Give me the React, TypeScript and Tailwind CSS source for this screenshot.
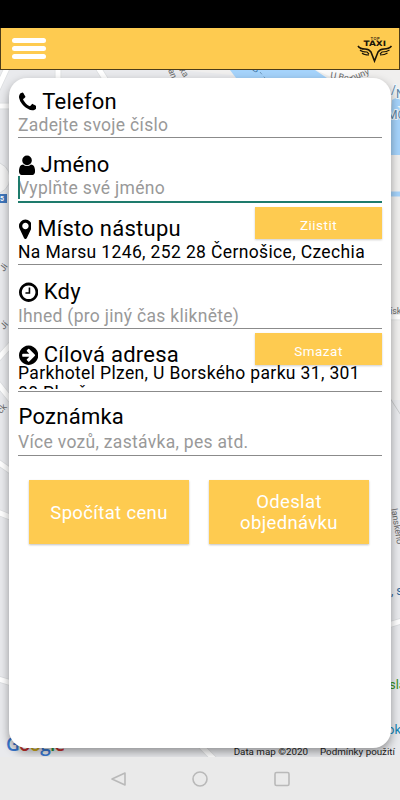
import type { ReactNode } from 'react';
import clsx from 'clsx';

const icons = {
  phone: {
    x: 192,
    w: 1408,
    d: 'M1600 1240q0 27-10 70.5t-21 68.5q-21 50-122 106-94 51-186 51-27 0-53-3.5t-57.5-12.5-47-14.5-55.5-20.5-49-18q-98-35-175-83-127-79-264-216t-216-264q-48-77-83-175-3-9-18-49t-20.5-55.5-14.5-47-12.5-57.5-3.5-53q0-92 51-186 56-101 106-122 25-11 68.5-21t70.5-10q14 0 21 3 18 6 53 76 11 19 30 54t35 63.5 31 53.5q3 4 17.5 25t21.5 35.5 7 28.5q0 20-28.5 50t-62 55-62 53-28.5 46q0 9 5 22.5t8.5 20.5 14 24 11.5 19q76 137 174 235t235 174q2 1 19 11.5t24 14 20.5 8.5 22.5 5q18 0 46-28.5t53-62 55-62 50-28.5q14 0 28.5 7t35.5 21.5 25 17.5q25 15 53.5 31t63.5 35 54 30q70 35 76 53 3 7 3 21z',
  },
  user: {
    x: 256,
    w: 1280,
    d: 'M1536 1399q0 109-62.5 187t-150.5 78h-854q-88 0-150.5-78t-62.5-187q0-85 8.5-160.5t31.5-152 58.5-131 94-89 134.5-34.5q131 128 313 128t313-128q76 0 134.5 34.5t94 89 58.5 131 31.5 152 8.5 160.5zm-256-887q0 159-112.5 271.5t-271.5 112.5-271.5-112.5-112.5-271.5 112.5-271.5 271.5-112.5 271.5 112.5 112.5 271.5z',
  },
  marker: {
    x: 384,
    w: 1024,
    d: 'M1152 640q0-106-75-181t-181-75-181 75-75 181 75 181 181 75 181-75 75-181zm256 0q0 109-33 179l-364 774q-16 33-47.5 52t-67.5 19-67.5-19-46.5-52l-365-774q-33-70-33-179 0-212 150-362t362-150 362 150 150 362z',
  },
  clock: {
    x: 128,
    w: 1536,
    d: 'M1024 544v448q0 14-9 23t-23 9h-320q-14 0-23-9t-9-23v-64q0-14 9-23t23-9h224v-352q0-14 9-23t23-9h64q14 0 23 9t9 23zm416 352q0-148-73-273t-198-198-273-73-273 73-198 198-73 273 73 273 198 198 273 73 273-73 198-198 73-273zm224 0q0 209-103 385.5t-279.5 279.5-385.5 103-385.5-103-279.5-279.5-103-385.5 103-385.5 279.5-279.5 385.5-103 385.5 103 279.5 279.5 103 385.5z',
  },
  arrow: {
    x: 128,
    w: 1536,
    d: 'M1413 896q0-27-18-45l-91-91-362-362q-18-18-45-18t-45 18l-91 91q-18 18-18 45t18 45l189 189h-502q-26 0-45 19t-19 45v128q0 26 19 45t45 19h502l-189 189q-19 19-19 45t19 45l91 91q18 18 45 18t45-18l362-362 91-91q18-18 18-45zm251 0q0 209-103 385.5t-279.5 279.5-385.5 103-385.5-103-279.5-279.5-103-385.5 103-385.5 279.5-279.5 385.5-103 385.5 103 279.5 279.5 103 385.5z',
  },
};

function Icon({ name }: { name: keyof typeof icons }) {
  const icon = icons[name];
  return (
    <svg viewBox={`${icon.x} 0 ${icon.w} 1792`} className="h-[22.5px] w-auto shrink-0" fill="currentColor">
      <path d={icon.d} />
    </svg>
  );
}

interface FieldProps {
  icon?: keyof typeof icons;
  label: string;
  className: string;
  action?: string;
  children: ReactNode;
}

function Field({ icon, label, className, action, children }: FieldProps) {
  return (
    <div className={clsx('relative flex flex-col justify-end border-[#8b8b8b]', className)}>
      <div className="flex h-[26px] shrink-0 items-center gap-1.5 pl-[0.5px] text-[22px] leading-[26px] tracking-[0.25px] text-black">
        {icon && <Icon name={icon} />}
        <span>{label}</span>
      </div>
      {action && (
        <button className="absolute right-0 top-1 h-8 w-[127px] bg-[#fecb50] pt-[5px] text-center text-[13.5px] leading-[27px] tracking-[0.5px] text-white shadow-[0_1px_2px_rgba(0,0,0,0.2)]">
          {action}
        </button>
      )}
      {children}
    </div>
  );
}

// Streets, river and labels that show round the edges of the card
function MapBackground() {
  return (
    <svg viewBox="0 0 400 687" className="absolute inset-0 h-full w-full" fontFamily="Roboto, sans-serif">
      <rect width="400" height="687" fill="#e9eaed" />
      <path d="M180 0H400V330H390V20Z" fill="#f0efee" />
      <g stroke="#dcdee0" strokeWidth="6.5" fill="none">
        <path d="M8 -4L-4 22M58 -5V20M97 -4L112 20M-5 36H20M-5 292L15 270M-5 310L15 335M-5 390L15 404M-5 441L15 449M-5 608L15 614M195 670L215 690M385 247H405M385 556L405 550" />
      </g>
      <g stroke="#fff" strokeWidth="5" fill="none">
        <path d="M8 -4L-4 22M58 -5V20M97 -4L112 20M-5 36H20M-5 292L15 270M-5 310L15 335M-5 390L15 404M-5 441L15 449M-5 608L15 614M195 670L215 690M385 247H405M385 556L405 550" />
      </g>
      <path d="M388 325L404 350" stroke="#c9cbcd" fill="none" />
      <path d="M316 0L342 12L370 0Z" fill="#fafafa" />
      <circle cx="-6" cy="108" r="16" fill="#f5f5f5" stroke="#d5d7da" />
      <path d="M230 0H315L345 20H245Z" fill="#a5d3fb" />
      <path d="M392 30Q398 26 400 30V85H388Z" fill="#a5d3fb" />
      <path d="M386 64Q394 76 402 72M388 124H402" stroke="#a5d3fb" strokeWidth="5" fill="none" />
      <path d="M260 2L270 14" stroke="#719bc0" strokeDasharray="3 3" fill="none" />
      <g fill="#68696b" fontSize="9">
        <text transform="translate(330 8) rotate(10)">U Ber</text>
        <text transform="translate(352 11) rotate(-22)">ouny</text>
        <text transform="translate(168 0) rotate(68)">an</text>
        <text transform="translate(179 0) rotate(58)">ka</text>
        <text transform="translate(252 0) rotate(35)" fill="#4278a8">B</text>
        <text transform="translate(4 260) rotate(-50)">Jí</text>
        <text transform="translate(4 202) rotate(-55)">Ji</text>
        <text transform="translate(1 344) rotate(-48)">ck</text>
        <text x="390" y="244">ísk</text>
        <text transform="translate(391 439) rotate(80)">lanského</text>
      </g>
      <g fill="#5e85a5" stroke="#edf6fd" strokeWidth="2" paintOrder="stroke" fontSize="12">
        <text x="391" y="24">/</text>
        <text x="396" y="28">N</text>
        <text x="387" y="49">MČ</text>
      </g>
      <rect x="-2" y="124" width="9" height="9" fill="#3f76bb" />
      <text x="0" y="131" fontSize="7" fontWeight="700" fill="#fff">5</text>
      <text x="391" y="525" fontSize="12" fill="#31699b">, s</text>
      <text x="389" y="619" fontSize="13" fill="#379226">sla</text>
      <text x="387" y="664" fontSize="13" fill="#1684b5">ok</text>
    </svg>
  );
}

function TaxiLogo() {
  return (
    <svg viewBox="0 0 38 28" className="h-7 w-[38px]" fill="none" stroke="#1a1408">
      <text x="13.5" y="5" fontFamily="Inter" fontSize="4" fontWeight="600" textLength="9" fill="#33280f" stroke="none">TOP</text>
      <text x="6.5" y="11.4" fontFamily="DejaVu Sans" fontSize="7.4" fontWeight="700" textLength="22.5" lengthAdjust="spacingAndGlyphs" fill="#1a1408" stroke="none">TAXI</text>
      <path d="M1 11Q3 14 8 14Q12 14 14 17L17.5 26L21 17Q23 14 27 14Q32 14 34.5 11" strokeWidth="1.6" />
      <path d="M3 15Q5 17 10 17L12 19M32.5 15Q30 17 25 17L23 19M5 18Q7 20 12 20M30.5 18Q28 20 23 20" strokeWidth="1.1" />
    </svg>
  );
}

export default function App() {
  return (
    <div className="flex h-[800px] w-[400px] flex-col overflow-hidden bg-black font-['Roboto',sans-serif]">
      <div className="h-7 shrink-0 bg-black" />

      <header className="flex h-[42px] shrink-0 items-center justify-between border border-t-0 border-[#4d3d18] bg-[#fecb50] pl-[11px] pr-1">
        <div className="flex flex-col gap-[3px]">
          <span className="h-[5px] w-[34px] rounded-full bg-white" />
          <span className="h-[5px] w-[34px] rounded-full bg-white" />
          <span className="h-[5px] w-[34px] rounded-full bg-white" />
        </div>
        <TaxiLogo />
      </header>

      <main className="relative h-[687px] shrink-0 overflow-hidden px-[9px] pt-2">
        <MapBackground />
        <div className="absolute bottom-[3px] left-[6px] font-['Open_Sans',sans-serif] text-[19px] font-semibold leading-5 tracking-[-0.9px]">
          <span className="text-[#3978d0]">G</span>
          <span className="text-[#c9302b]">o</span>
          <span className="text-[#d3ad19]">o</span>
          <span className="text-[#3978d0]">g</span>
          <span className="text-[#2d963b]">l</span>
          <span className="text-[#c9302b]">e</span>
        </div>
        <div className="absolute bottom-0 right-[5px] flex gap-3 text-[9.8px] leading-[11px] text-[#222]">
          <span>Data map ©2020</span>
          <span>Podmínky použití</span>
        </div>

        <section className="relative h-[670px] rounded-[18px] bg-white px-[9px] shadow-[0_4px_10px_rgba(0,0,0,0.38)]">
          <Field icon="phone" label="Telefon" className="h-[60px] border-b">
            <p className="h-[22px] text-[17.5px] leading-[21px] tracking-[0.3px] text-[#999]">Zadejte svoje číslo</p>
          </Field>
          <Field icon="user" label="Jméno" className="h-[65px] border-b-2 border-b-[#1e7b6c]">
            <p className="relative h-[23px] text-[17.5px] leading-[21px] tracking-[0.3px] text-[#999]">
              <span className="absolute -top-0.5 left-0 h-[23px] w-[1.5px] bg-[#1e7b6c]" />
              Vyplňte své jméno
            </p>
          </Field>
          <Field icon="marker" label="Místo nástupu" action="Ziistit" className="h-[62px] border-b">
            <p className="h-[22px] text-[17.5px] leading-[21px] tracking-[0.36px] text-black">Na Marsu 1246, 252 28 Černošice, Czechia</p>
          </Field>
          <Field icon="clock" label="Kdy" className="h-16 border-b">
            <p className="h-[23px] text-[17.5px] leading-[22px] tracking-[0.3px] text-[#999]">Ihned (pro jiný čas klikněte)</p>
          </Field>
          <Field icon="arrow" label="Cílová adresa" action="Smazat" className="h-[63px] border-b">
            <p className="-mt-[5px] mb-0.5 h-[26px] overflow-hidden text-[17.5px] leading-[20px] tracking-[0.35px] text-black">
              Parkhotel Plzen, U Borského parku 31, 301 00 Plzeň
            </p>
          </Field>
          <Field label="Poznámka" className="h-16 border-b">
            <p className="h-[25px] text-[17.5px] leading-6 tracking-[0.3px] text-[#999]">Více vozů, zastávka, pes atd.</p>
          </Field>

          <div className="mt-6 flex gap-5 px-[11px] text-[18.5px] leading-[21px] tracking-[0.35px] text-white">
            <button className="h-16 w-40 bg-[#fecb50] pt-0.5 shadow-[0_1px_2px_rgba(0,0,0,0.25)]">Spočítat cenu</button>
            <button className="h-16 w-40 bg-[#fecb50] pt-0.5 shadow-[0_1px_2px_rgba(0,0,0,0.25)]">
              Odeslat
              <br />
              objednávku
            </button>
          </div>
        </section>
      </main>

      <nav className="flex h-[43px] shrink-0 items-center justify-center bg-[#eaeaea]">
        <svg width="182" height="18" viewBox="0 0 182 18" fill="none" stroke="#b9b9b9" strokeWidth="1.6">
          <path d="M3 9L16 3V15Z" strokeLinejoin="round" />
          <circle cx="91" cy="9" r="7" />
          <rect x="166" y="2.5" width="14" height="13" rx="1.5" />
        </svg>
      </nav>
    </div>
  );
}
